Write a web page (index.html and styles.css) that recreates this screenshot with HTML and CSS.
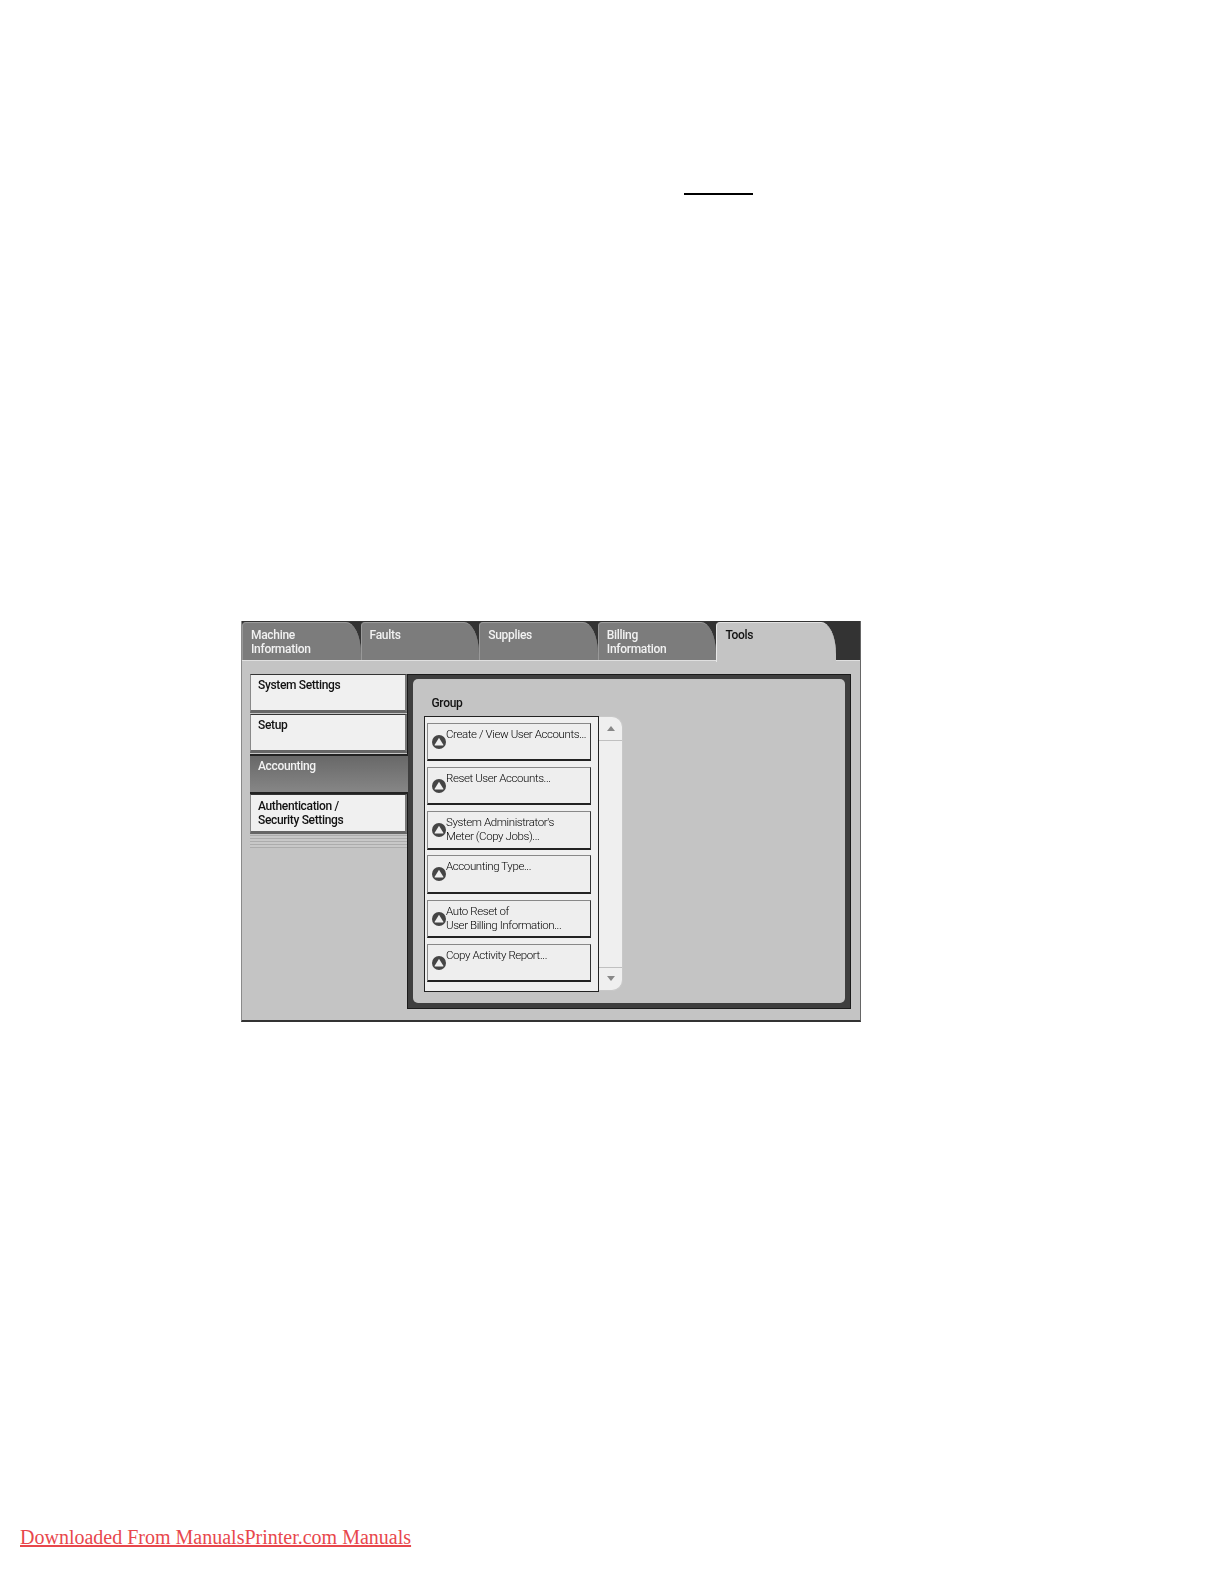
FILE: index.html
```html
<!DOCTYPE html>
<html lang="en">
<head>
<meta charset="utf-8">
<title>Accounting</title>
<link rel="stylesheet" href="styles.css">
</head>
<body>
<svg class="defs" width="0" height="0" aria-hidden="true">
  <symbol id="go" viewBox="0 0 16 16">
    <circle cx="8" cy="8" r="8" fill="#454545"/>
    <path d="M8 3.2 L13 11 Q13.2 12 12.2 12 L3.8 12 Q2.8 12 3 11 Z" fill="#efefef"/>
  </symbol>
</svg>
<div class="rule"></div>
<main class="screen">
  <div class="tabs">
    <div class="tab">Machine<br>Information</div>
    <div class="tab">Faults</div>
    <div class="tab">Supplies</div>
    <div class="tab">Billing<br>Information</div>
    <div class="tab active">Tools</div>
  </div>
  <div class="content">
    <nav class="side">
      <div class="side-btn">System Settings</div>
      <div class="side-btn">Setup</div>
      <div class="side-btn current">Accounting</div>
      <div class="side-btn">Authentication /<br>Security Settings</div>
      <div class="stripes"></div>
    </nav>
    <section class="panel">
      <div class="panel-inner">
        <div class="group-label">Group</div>
        <div class="list-wrap">
          <div class="list">
            <div class="item"><svg class="ico"><use href="#go"/></svg><span>Create / View User Accounts...</span></div>
            <div class="item"><svg class="ico"><use href="#go"/></svg><span>Reset User Accounts...</span></div>
            <div class="item"><svg class="ico"><use href="#go"/></svg><span>System Administrator's<br>Meter (Copy Jobs)...</span></div>
            <div class="item"><svg class="ico"><use href="#go"/></svg><span>Accounting Type...</span></div>
            <div class="item"><svg class="ico"><use href="#go"/></svg><span>Auto Reset of<br>User Billing Information...</span></div>
            <div class="item"><svg class="ico"><use href="#go"/></svg><span>Copy Activity Report...</span></div>
          </div>
          <div class="scroll">
            <div class="scroll-btn up"><i class="arrow-up"></i></div>
            <div class="scroll-btn down"><i class="arrow-down"></i></div>
          </div>
        </div>
      </div>
    </section>
  </div>
</main>
<footer class="foot"><a href="#">Downloaded From ManualsPrinter.com Manuals</a></footer>
</body>
</html>
```
FILE: styles.css
```css
html, body { margin: 0; padding: 0; background: #fff; }
body { height: 1584px; overflow: hidden; position: relative; }
.defs { position: absolute; }
.rule { width: 69px; height: 2px; background: #000; margin: 193px 0 0 684px; }
.screen {
  width: 620px; height: 401px; margin: 426px 0 0 241px;
  background: #c4c4c4; font-family: Roboto, "Liberation Sans", sans-serif;
  font-size: 12px; line-height: 14px; color: #111;
  display: flex; flex-direction: column; box-sizing: border-box;
  border: 1px solid #666; border-top: 0; border-left-color: #8a8a8a;
  border-bottom: 2px solid #333;
  filter: blur(0.4px);
}
.tabs { display: flex; height: 39px; background: #333; flex: none; padding-top: 1px; box-sizing: border-box; }
.tab {
  width: 118.6px; height: 38px; box-sizing: border-box; padding: 5px 0 0 8px; flex: none;
  background: #7c7c7c; color: #f2f2f2; font-weight: 500;
  border-radius: 4px 15px 0 0 / 4px 32px 0 0;
  border-top: 1px solid #9c9c9c; border-left: 1px solid #999;
  letter-spacing: -0.3px;
}
.tab.active {
  width: 119.6px; height: 40px; background: #c4c4c4; color: #111; position: relative; z-index: 1;
  border-top: 1px solid #e2e2e2; border-left: 1px solid #e8e8e8;
}
.content { flex: 1; display: flex; align-items: flex-start; padding: 12.5px 0 0 8px; border-top: 1px solid #e0e0e0; }
.side { width: 157px; flex: none; display: flex; flex-direction: column; }
.side-btn {
  width: 156.5px; height: 39.5px; margin-bottom: 0.8px; box-sizing: border-box; flex: none;
  padding: 3.5px 0 0 7px; background: #f0f0f0; font-weight: 500; color: #111;
  letter-spacing: -0.35px;
  border: 1px solid #333; border-left-color: #888;
  border-right: 2px solid #777; border-bottom: 3px solid #666;
}
.side-btn.current {
  width: 158px; color: #f2f2f2; position: relative; z-index: 1;
  background: linear-gradient(#686868, #868686);
  border: 0; border-top: 2px solid #222; border-bottom: 2px solid #222; padding: 3px 0 0 8px;
}
.stripes {
  height: 13px; width: 156.5px;
  background: repeating-linear-gradient(#acacac 0 1px, #c8c8c8 1px 3px);
}
.panel {
  width: 444px; height: 335.5px; flex: none; box-sizing: border-box;
  background: #3e3e3e; padding: 4.5px 5px 5px 4.5px; border: 1px solid #1a1a1a;
}
.panel-inner {
  height: 100%; background: #c4c4c4; border-radius: 5px;
  box-sizing: border-box; padding: 16.5px 0 0 11.5px;
}
.group-label { font-weight: 500; color: #111; margin: 0 0 6.7px 7.5px; letter-spacing: -0.3px; }
.list-wrap { display: flex; align-items: flex-start; }
.list {
  width: 175.4px; height: 275.6px; box-sizing: border-box; background: #efefef;
  border: 1px solid #222; padding: 5.6px 0 0 2px; flex: none;
}
.item {
  width: 164.4px; height: 38.5px; box-sizing: border-box; margin-bottom: 5.7px;
  background: #eeeeee; border: 1px solid #888; border-bottom: 2px solid #222; border-right: 1px solid #333;
  display: flex; align-items: flex-start; padding: 3px 0 0 4px;
  font-size: 11.5px; font-weight: 300; line-height: 14px; letter-spacing: -0.4px; color: #000; white-space: nowrap;
}
.ico { width: 14px; height: 14px; flex: none; margin-top: 8px; }
.scroll {
  width: 23.6px; height: 274.6px; background: #efefef; border-radius: 0 11px 11px 0;
  border: 1px solid #c8c8c8; border-left: 0; box-sizing: border-box;
  display: flex; flex-direction: column; justify-content: space-between;
}
.scroll-btn { height: 22px; display: flex; align-items: center; justify-content: center; flex: none; }
.scroll-btn.up { height: 23px; border-bottom: 1px solid #c0c0c0; }
.scroll-btn.down { border-top: 1px solid #c0c0c0; }
.arrow-up { width: 0; height: 0; border: 4px solid transparent; border-top: 0; border-bottom: 5px solid #888; }
.arrow-down { width: 0; height: 0; border: 4px solid transparent; border-bottom: 0; border-top: 5px solid #888; }
.foot { margin: 503px 0 0 20px; font-family: "Liberation Serif", "Times New Roman", serif; font-size: 20px; line-height: 24px; }
.foot a { color: #e8474c; text-decoration: underline; }
```
